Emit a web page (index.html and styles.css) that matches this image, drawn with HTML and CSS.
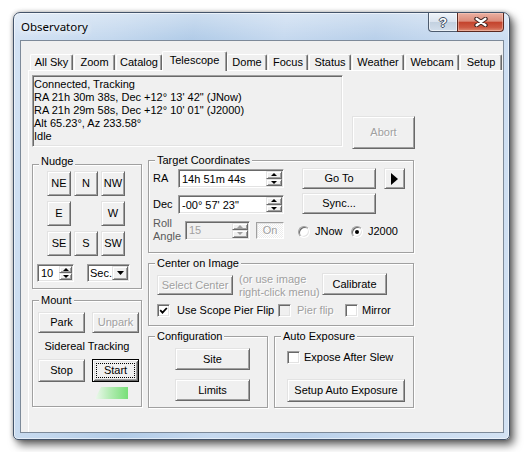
FILE: index.html
```html
<!DOCTYPE html>
<html lang="en">
<head>
<meta charset="utf-8">
<title>Observatory</title>
<link rel="stylesheet" href="styles.css">
</head>
<body>
<div class="window">
  <div class="titlebar">
    <div class="title">Observatory</div>
    <div class="caption">
      <div class="cbtn help"><span class="qmark">?</span></div>
      <div class="cbtn close">
        <svg width="14" height="10" viewBox="0 0 14 10"><path d="M2.5 1.8 L11.5 8.2 M11.5 1.8 L2.5 8.2" stroke="#3f2522" stroke-width="4.4" stroke-linecap="round" fill="none"/><path d="M2.5 1.8 L11.5 8.2 M11.5 1.8 L2.5 8.2" stroke="#fff" stroke-width="2.3" stroke-linecap="round" fill="none"/></svg>
      </div>
    </div>
  </div>
  <div class="client">
    <div class="tabs">
      <div class="tab">All Sky</div>
      <div class="tab">Zoom</div>
      <div class="tab">Catalog</div>
      <div class="tab sel">Telescope</div>
      <div class="tab">Dome</div>
      <div class="tab">Focus</div>
      <div class="tab">Status</div>
      <div class="tab">Weather</div>
      <div class="tab">Webcam</div>
      <div class="tab">Setup</div>
    </div>
    <div class="panel">
      <div class="toprow">
        <div class="status sunken">
          <div>Connected, Tracking</div>
          <div>RA 21h 30m 38s, Dec +12° 13' 42" (JNow)</div>
          <div>RA 21h 29m 58s, Dec +12° 10' 01" (J2000)</div>
          <div>Alt 65.23°, Az 233.58°</div>
          <div>Idle</div>
        </div>
        <div class="btn dis abort">Abort</div>
      </div>
      <div class="cols">
        <div class="leftcol">
          <div class="group nudge">
            <div class="legend">Nudge</div>
            <div class="ngrid">
              <div class="btn">NE</div><div class="btn">N</div><div class="btn">NW</div>
              <div class="btn">E</div><div class="blank"></div><div class="btn">W</div>
              <div class="btn">SE</div><div class="btn">S</div><div class="btn">SW</div>
            </div>
            <div class="nrow">
              <div class="edit spin10">
                <span class="etext">10</span>
                <div class="spin narrow"><div class="sb"><i class="up"></i></div><div class="sb"><i class="dn"></i></div></div>
              </div>
              <div class="edit combo">
                <span class="etext ctxt">Sec.</span>
                <div class="ddb"><svg width="7" height="4" viewBox="0 0 7 4"><polygon points="0,0 7,0 3.5,4" fill="#000"/></svg></div>
              </div>
            </div>
          </div>
          <div class="group mount">
            <div class="legend">Mount</div>
            <div class="mrow r1">
              <div class="btn mb">Park</div>
              <div class="btn mb dis">Unpark</div>
            </div>
            <div class="sidereal">Sidereal Tracking</div>
            <div class="mrow r2">
              <div class="btn mb tall">Stop</div>
              <div class="btn mb tall def"><span class="focus">Start</span></div>
            </div>
            <svg class="gbar" width="33" height="12" viewBox="0 0 33 12">
              <defs><linearGradient id="gg" x1="0" x2="1" y1="0" y2="0"><stop offset="0" stop-color="#eef8ee"/><stop offset="0.45" stop-color="#b4ecb4"/><stop offset="1" stop-color="#78df78"/></linearGradient></defs>
              <polygon points="6,0 33,0 33,12 0,12" fill="url(#gg)"/>
            </svg>
          </div>
        </div>
        <div class="rightcol">
          <div class="group target">
            <div class="legend">Target Coordinates</div>
            <div class="tbody">
              <div class="tleft">
                <div class="frow ra">
                  <span class="flabel">RA</span>
                  <div class="edit field">
                    <span class="etext">14h 51m 44s</span>
                    <div class="spin"><div class="sb"><i class="up"></i></div><div class="sb"><i class="dn"></i></div></div>
                  </div>
                </div>
                <div class="frow dec">
                  <span class="flabel">Dec</span>
                  <div class="edit field">
                    <span class="etext">-00° 57' 23"</span>
                    <div class="spin"><div class="sb"><i class="up"></i></div><div class="sb"><i class="dn"></i></div></div>
                  </div>
                </div>
                <div class="frow roll">
                  <span class="flabel roll-l">Roll<br>Angle</span>
                  <div class="edit field rollf">
                    <span class="etext">15</span>
                    <div class="spin"><div class="sb"><i class="up g"></i></div><div class="sb"><i class="dn g"></i></div></div>
                  </div>
                  <div class="onbtn">On</div>
                </div>
              </div>
              <div class="tright">
                <div class="gorow">
                  <div class="btn gbtn">Go To</div>
                  <div class="btn arrow"><svg width="7" height="12" viewBox="0 0 7 12"><polygon points="0,0 7,6 0,12" fill="#000"/></svg></div>
                </div>
                <div class="btn gbtn sync">Sync...</div>
                <div class="radios">
                  <div class="ritem first"><span class="radio"></span><span class="rtext">JNow</span></div>
                  <div class="ritem"><span class="radio on"></span><span class="rtext">J2000</span></div>
                </div>
              </div>
            </div>
          </div>
          <div class="group center">
            <div class="legend">Center on Image</div>
            <div class="crow1">
              <div class="btn dis selc">Select Center</div>
              <div class="hint">(or use image<br>right-click menu)</div>
              <div class="btn calib">Calibrate</div>
            </div>
            <div class="crow2">
              <div class="citem c1"><span class="cb"><svg width="9" height="9" viewBox="0 0 9 9"><path d="M1.2 4.2 L3.5 6.6 L7.8 2" fill="none" stroke="#000" stroke-width="1.8"/></svg></span><span class="ctext">Use Scope Pier Flip</span></div>
              <div class="citem c2"><span class="cb dis"></span><span class="ctext dis">Pier flip</span></div>
              <div class="citem c3"><span class="cb"></span><span class="ctext">Mirror</span></div>
            </div>
          </div>
          <div class="brow">
            <div class="group config">
              <div class="legend">Configuration</div>
              <div class="btn cfg site">Site</div>
              <div class="btn cfg limits">Limits</div>
            </div>
            <div class="group auto">
              <div class="legend">Auto Exposure</div>
              <div class="citem aitem"><span class="cb"></span><span class="ctext">Expose After Slew</span></div>
              <div class="btn setup">Setup Auto Exposure</div>
            </div>
          </div>
        </div>
      </div>
    </div>
  </div>
</div>
</body>
</html>
```

FILE: styles.css
```css
* { box-sizing: border-box; }
html, body { margin: 0; padding: 0; }
body {
  width: 527px; height: 452px; overflow: hidden;
  background: #fff;
  font-family: "Liberation Sans", Arial, sans-serif;
  font-size: 11px; color: #000;
}

/* window frame */
.window {
  display: flex; flex-direction: column;
  width: 497px; height: 428px;
  margin: 12px 0 0 13px;
  padding: 0 5px 6px 6px;
  border: 1px solid #44546a;
  border-radius: 7px 7px 5px 5px;
  background:
    linear-gradient(180deg, rgba(255,255,255,.35), rgba(255,255,255,0) 26px),
    linear-gradient(100deg, #d4e3f4 0%, #c4d8ee 18%, #b2cce8 32%, #c6d9ef 48%, #b9d0ea 64%, #c9dbf0 80%, #d3e2f3 100%);
  box-shadow: inset 0 0 0 1px rgba(255,255,255,.55), 4px 5px 9px rgba(0,0,0,.6), 0 0 4px rgba(0,0,0,.3);
}
.titlebar { height: 27px; flex: none; display: flex; justify-content: space-between; align-items: flex-start; }
.title {
  padding: 6px 0 0 1px;
  font-family: "Noto Sans", "Open Sans", sans-serif;
  font-size: 11.5px; line-height: 16px; color: #000;
  text-shadow: 0 0 6px #fff, 0 0 10px rgba(255,255,255,.8);
}
.caption { display: flex; }
.cbtn { height: 19px; display: flex; align-items: center; justify-content: center; border: 1px solid #4d5b6e; border-top: none; }
.help {
  width: 29px; border-right: none; border-radius: 0 0 0 4px;
  background: linear-gradient(180deg, #eef3f9 0%, #dbe4ef 48%, #c3d1e0 52%, #d3dfec 100%);
  box-shadow: inset 0 0 0 1px rgba(255,255,255,.55);
}
.qmark {
  font-family: "Liberation Sans", Arial, sans-serif; font-weight: bold; font-size: 13px; line-height: 13px; color: #fff;
  text-shadow: 1px 0 0 #3b4a5e, -1px 0 0 #3b4a5e, 0 1px 0 #3b4a5e, 0 -1px 0 #3b4a5e;
  margin-top: 1px;
}
.close {
  width: 47px; border-color: #5a2820; border-radius: 0 0 4px 0;
  background: linear-gradient(180deg, #eab0a2 0%, #dc8c7a 45%, #c4442d 52%, #cd5a43 80%, #de8e75 100%);
  box-shadow: inset 0 0 0 1px rgba(255,215,200,.45);
}

/* client + tabs */
.client {
  height: 393px; flex: none;
  display: flex; flex-direction: column;
  border: 1px solid #7d8a99;
  background: #f0f0f0;
}
.tabs { display: flex; align-items: flex-end; height: 29px; padding-left: 9px; flex: none; }
.tab {
  flex: none; height: 16px; margin-right: 1px;
  background: #f0f0f0;
  border-top: 1px solid #fff; border-left: 1px solid #fff; border-right: 1px solid #696969;
  box-shadow: inset -1px 0 0 #a0a0a0;
  border-radius: 2px 2px 0 0;
  text-align: center; line-height: 14px; white-space: nowrap;
}
.tab:nth-child(1) { width: 43px; }
.tab:nth-child(2) { width: 41px; }
.tab:nth-child(3) { width: 46px; }
.tab:nth-child(4) { width: 65px; }
.tab:nth-child(5) { width: 40px; }
.tab:nth-child(6) { width: 40px; }
.tab:nth-child(7) { width: 42px; }
.tab:nth-child(8) { width: 52px; }
.tab:nth-child(9) { width: 54px; }
.tab:nth-child(10) { width: 42px; }
.tab.sel { height: 20px; margin: 0 0 -1px -1px; line-height: 17px; position: relative; z-index: 1; }
.panel { flex: 1; margin-left: 7px; border-top: 1px solid #fff; border-left: 1px solid #fff; }

/* common controls */
.sunken {
  border: 1px solid; border-color: #a0a0a0 #fff #fff #a0a0a0;
  box-shadow: inset 1px 1px 0 #696969, inset -1px -1px 0 #e3e3e3;
}
.btn {
  display: flex; align-items: center; justify-content: center; flex: none;
  background: #f0f0f0;
  border: 1px solid; border-color: #e3e3e3 #696969 #696969 #e3e3e3;
  box-shadow: inset 1px 1px 0 #fff, inset -1px -1px 0 #a0a0a0;
  line-height: 13px; white-space: nowrap;
}
.btn.dis { color: #a0a0a0; text-shadow: 1px 1px 0 #fff; }
.btn.def {
  border-color: #000;
  box-shadow: inset 1px 1px 0 #fff, inset -1px -1px 0 #696969, inset 2px 2px 0 #e3e3e3, inset -2px -2px 0 #a0a0a0;
}
.focus { flex: 1; align-self: stretch; margin: 3px; border: 1px dotted #000; display: flex; align-items: center; justify-content: center; }
.edit {
  display: flex; flex: none; padding: 1px; background: #fff;
  border: 1px solid; border-color: #a0a0a0 #fff #fff #a0a0a0;
  box-shadow: inset 1px 1px 0 #696969, inset -1px -1px 0 #e3e3e3;
}
.etext { flex: 1; padding-left: 2px; display: flex; align-items: center; white-space: nowrap; overflow: hidden; }
.etext.ctxt { padding-left: 1px; overflow: visible; min-width: 0; }
.spin { display: flex; flex-direction: column; width: 16px; flex: none; }
.spin.narrow { width: 13px; }
.sb {
  flex: 1; display: flex; align-items: center; justify-content: center;
  background: #f0f0f0;
  border: 1px solid; border-color: #e3e3e3 #696969 #696969 #e3e3e3;
  box-shadow: inset 1px 1px 0 #fff, inset -1px -1px 0 #a0a0a0;
}
.up { width: 0; height: 0; border-left: 3px solid transparent; border-right: 3px solid transparent; border-bottom: 3px solid #000; }
.dn { width: 0; height: 0; border-left: 3px solid transparent; border-right: 3px solid transparent; border-top: 3px solid #000; }
.up.g { border-bottom-color: #a0a0a0; }
.dn.g { border-top-color: #a0a0a0; }
.cb {
  width: 13px; height: 13px; flex: none; background: #fff;
  border: 1px solid; border-color: #a0a0a0 #fff #fff #a0a0a0;
  box-shadow: inset 1px 1px 0 #696969, inset -1px -1px 0 #e3e3e3;
  display: flex; align-items: center; justify-content: center;
}
.cb.dis { background: #f0f0f0; }
.radio {
  width: 12px; height: 12px; flex: none; border-radius: 50%; background: #fff;
  border: 1px solid; border-color: #a0a0a0 #fff #fff #a0a0a0;
  box-shadow: inset 1px 1px 0 #696969, inset -1px -1px 0 #e3e3e3;
  display: flex; align-items: center; justify-content: center;
}
.radio.on::after { content: ""; width: 4px; height: 4px; border-radius: 50%; background: #000; }

/* group boxes */
.group {
  border: 1px solid #a0a0a0;
  box-shadow: inset 1px 1px 0 #fff, 1px 1px 0 #fff;
}
.legend {
  display: block; width: max-content; height: 13px; line-height: 13px;
  margin: -7px 0 0 6px; padding: 0 2px; background: #f0f0f0; white-space: nowrap;
}

/* layout */
.toprow { display: flex; align-items: flex-start; height: 78px; }
.status { margin: 4px 0 0 3px; width: 311px; height: 72px; padding: 2px 1px 0 1px; line-height: 13px; white-space: nowrap; }
.abort { margin: 45px 0 0 9px; width: 63px; height: 33px; }
.cols { display: flex; align-items: flex-start; }
.leftcol { margin-left: 3px; width: 110px; flex: none; }
.rightcol { margin-left: 6px; width: 266px; flex: none; }

.nudge { margin-top: 15px; height: 125px; }
.nudge .legend { margin-top: -10px; }
.ngrid { display: grid; grid-template-columns: repeat(3, 24px); grid-template-rows: repeat(3, 25px); gap: 5px 3px; margin: 3px 0 0 14px; }
.nrow { display: flex; margin: 8px 0 0 4px; }
.spin10 { width: 37px; height: 18px; }
.combo { width: 43px; height: 18px; margin-left: 13px; }
.ddb {
  width: 16px; flex: none; display: flex; align-items: center; justify-content: center;
  background: #f0f0f0;
  border: 1px solid; border-color: #e3e3e3 #696969 #696969 #e3e3e3;
  box-shadow: inset 1px 1px 0 #fff, inset -1px -1px 0 #a0a0a0;
}

.mount { margin-top: 11px; height: 107px; }
.mrow { display: flex; margin-left: 5px; }
.mrow.r1 { margin-top: 5px; }
.mrow.r2 { margin-top: 6px; }
.mb { width: 47px; height: 21px; }
.mb + .mb { margin-left: 7px; }
.mb.tall { height: 23px; }
.sidereal { margin-top: 7px; height: 13px; line-height: 13px; text-align: center; }
.gbar { display: block; margin: 5px 0 0 62px; }

.target { margin-top: 11px; height: 93px; }
.tbody { display: flex; margin-left: 4px; }
.tleft { width: 131px; flex: none; }
.frow { display: flex; align-items: center; }
.frow.ra { margin-top: 2px; }
.frow.dec { margin-top: 7px; }
.frow.roll { margin-top: 3px; height: 26px; }
.flabel { width: 25px; flex: none; line-height: 13px; }
.roll-l { width: 32px; color: #5a5a5a; }
.field { width: 106px; height: 19px; }
.rollf { width: 65px; background: #f0f0f0; color: #a0a0a0; }
.onbtn {
  width: 28px; height: 17px; margin-left: 6px; flex: none;
  display: flex; align-items: center; justify-content: center;
  border: 1px solid; border-color: #a0a0a0 #fff #fff #a0a0a0;
  box-shadow: inset 1px 1px 0 #e3e3e3;
  background-color: #f7f7f7;
  background-image: repeating-conic-gradient(#fff 0 25%, #ececec 0 50%);
  background-size: 2px 2px;
  color: #a0a0a0; text-shadow: 1px 1px 0 #fff;
}
.tright { margin-left: 18px; }
.gorow { display: flex; margin-top: 1px; }
.gbtn { width: 74px; height: 21px; }
.arrow { width: 21px; height: 21px; margin-left: 8px; }
.sync { margin-top: 4px; }
.radios { display: flex; margin: 11px 0 0 -4px; }
.ritem { display: flex; align-items: center; height: 13px; }
.ritem.first { width: 53px; }
.rtext { margin-left: 5px; line-height: 13px; }

.center { margin-top: 10px; height: 63px; }
.crow1 { display: flex; align-items: flex-start; margin-top: 3px; padding-left: 8px; }
.selc { width: 76px; height: 20px; margin-top: 2px; }
.hint { width: 83px; margin-left: 6px; line-height: 13px; color: #a0a0a0; text-shadow: 1px 1px 0 #fff; white-space: nowrap; }
.calib { width: 65px; height: 22px; }
.crow2 { display: flex; margin-top: 5px; padding-left: 8px; }
.citem { display: flex; align-items: center; height: 13px; flex: none; }
.c1 { width: 121px; }
.c2 { width: 67px; }
.ctext { margin-left: 6px; line-height: 13px; white-space: nowrap; }
.c1 .ctext { margin-left: 7px; }
.c3 .ctext { margin-left: 4px; }
.ctext.dis { color: #a0a0a0; text-shadow: 1px 1px 0 #fff; }

.brow { display: flex; margin-top: 10px; }
.config { width: 120px; height: 72px; flex: none; }
.cfg { width: 75px; height: 22px; margin-left: 26px; }
.site { margin-top: 5px; }
.limits { margin-top: 9px; }
.auto { width: 140px; height: 72px; margin-left: 6px; flex: none; }
.aitem { margin: 8px 0 0 12px; }
.aitem .ctext { margin-left: 4px; }
.setup { width: 118px; height: 23px; margin: 15px 0 0 12px; }
```
